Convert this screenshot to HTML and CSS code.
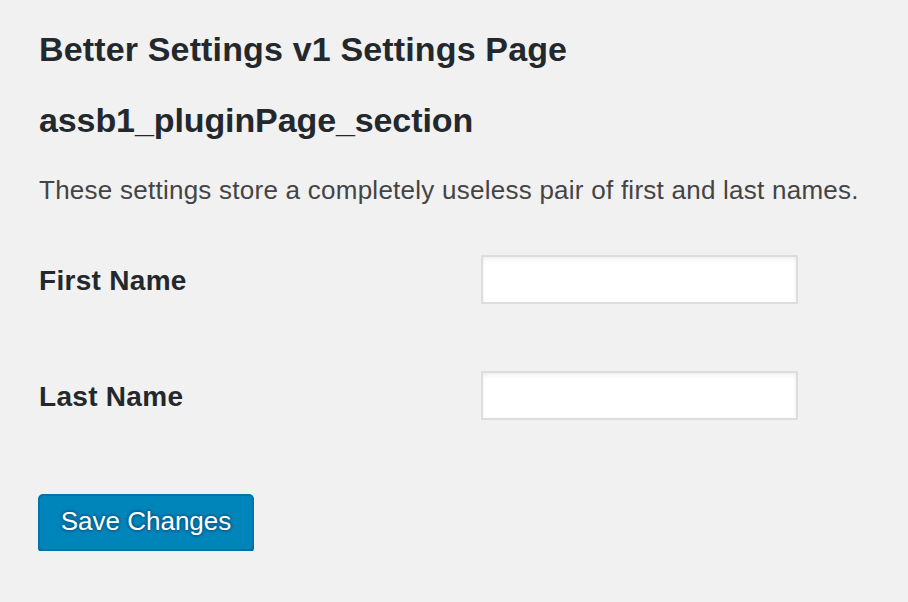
FILE: index.html
```html
<!DOCTYPE html>
<html>
<head>
<meta charset="utf-8">
<link rel="stylesheet" href="styles.css">
</head>
<body>
<div class="wrap">
  <h1 class="page-title">Better Settings v1 Settings Page</h1>
  <h2 class="section-title">assb1_pluginPage_section</h2>
  <p class="desc">These settings store a completely useless pair of first and last names.</p>
  <div class="form-table">
    <div class="row">
      <div class="label">First Name</div>
      <input class="field" type="text">
    </div>
    <div class="row">
      <div class="label">Last Name</div>
      <input class="field" type="text">
    </div>
  </div>
  <div class="submit">
    <button class="button-primary">Save Changes</button>
  </div>
</div>
</body>
</html>
```

FILE: styles.css
```css
html, body {
  margin: 0;
  padding: 0;
  background: #f1f1f1;
}
body {
  font-family: "Liberation Sans", Arial, sans-serif;
  color: #23282d;
}
.wrap {
  padding: 27px 0 0 39px;
}
.page-title {
  margin: 0;
  font-size: 34px;
  font-weight: 700;
  line-height: 44px;
  letter-spacing: 0.15px;
}
.section-title {
  margin: 27px 0 0;
  font-size: 34px;
  font-weight: 700;
  line-height: 44px;
  letter-spacing: -0.1px;
}
.desc {
  margin: 30px 0 0;
  font-size: 26px;
  line-height: 36px;
  letter-spacing: 0.25px;
  color: #444;
}
.form-table {
  margin-top: 47px;
  display: flex;
  flex-direction: column;
  gap: 67px;
}
.row {
  display: flex;
  align-items: center;
}
.label {
  width: 442px;
  font-size: 28px;
  font-weight: 700;
  letter-spacing: 0.3px;
  padding-top: 3px;
}
.field {
  box-sizing: border-box;
  width: 317px;
  height: 49px;
  margin: 0;
  border: 2px solid #ddd;
  background: #fff;
  box-shadow: inset 0 2px 4px rgba(0,0,0,0.07);
}
.submit {
  margin-top: 74px;
}
.button-primary {
  box-sizing: border-box;
  width: 216px;
  height: 57px;
  margin-left: -1px;
  padding: 0 0 3px;
  border: 2px solid #0073aa;
  border-radius: 5px;
  background: #0085ba;
  box-shadow: 0 2px 0 #006799;
  color: #fff;
  font-family: "Liberation Sans", Arial, sans-serif;
  font-size: 26px;
  text-shadow: 0 -2px 2px #006799, 2px 0 2px #006799, 0 2px 2px #006799, -2px 0 2px #006799;
}
```
